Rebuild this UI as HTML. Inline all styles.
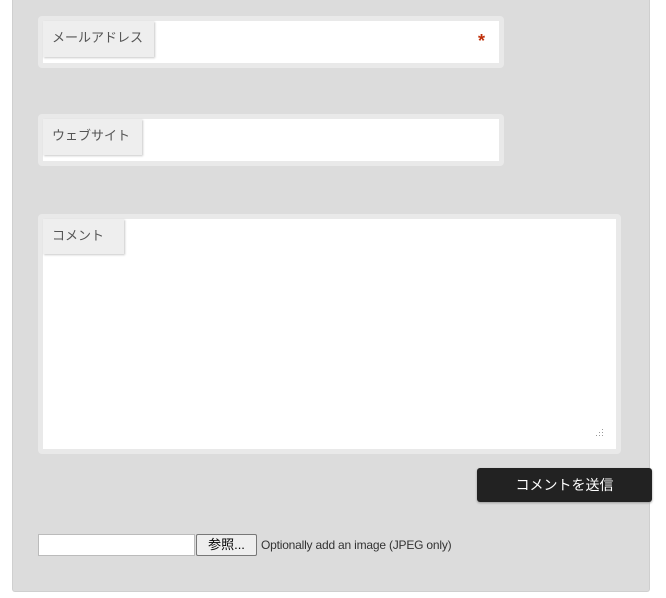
<!DOCTYPE html>
<html><head><meta charset="utf-8"><style>
body{margin:0;width:666px;height:598px;background:#fff;position:relative;overflow:hidden;font-family:"Liberation Sans","Noto Sans CJK JP",sans-serif}
.panel{position:absolute;left:12px;top:-2px;width:636px;height:593px;background:#dcdcdc;border:1px solid #cfcfcf;border-top:none;border-radius:0 0 3px 3px}
.f{position:absolute;background:#fff;border:5px solid #e9e9e9;border-radius:4px;box-sizing:border-box}
.lab{position:absolute;left:0;top:0;background:#eee;color:#555;font-size:13px;box-shadow:1px 1px 2px #c8c8c8;box-sizing:border-box;padding-left:9px;line-height:34px}
.star{position:absolute;right:14px;top:10px;color:#c0300a;font-weight:bold;font-size:18px}
.btn{position:absolute;left:477px;top:468px;width:175px;height:34px;background:#222;color:#fff;border-radius:3px;font-size:14px;line-height:34px;text-align:center;box-shadow:0 1px 2px #999}
.fi{position:absolute;left:38px;top:534px;width:157px;height:22px;background:#fff;border:1px solid #bbb;box-sizing:border-box}
.fb{position:absolute;left:196px;top:534px;width:61px;height:22px;background:#eee;border:1px solid #777;border-radius:2px;box-sizing:border-box;font-size:13px;text-align:center;line-height:20px}
.t{position:absolute;left:261px;top:538px;font-size:12px;color:#333;letter-spacing:-0.2px}
.grip{position:absolute;right:12px;bottom:12px;width:10px;height:10px}
</style></head><body>
<div class="panel"></div>
<div class="f" style="left:38px;top:16px;width:466px;height:52px"><div class="lab" style="width:111px;height:36px">メールアドレス</div><div class="star">*</div></div>
<div class="f" style="left:38px;top:114px;width:466px;height:52px"><div class="lab" style="width:99px;height:36px">ウェブサイト</div></div>
<div class="f" style="left:38px;top:214px;width:583px;height:240px"><div class="lab" style="width:81px;height:35px">コメント</div>
<svg class="grip" viewBox="0 0 10 10"><g fill="#999"><rect x="8" y="2" width="1" height="1"/><rect x="8" y="5" width="1" height="1"/><rect x="8" y="8" width="1" height="1"/><rect x="5" y="5" width="1" height="1"/><rect x="5" y="8" width="1" height="1"/><rect x="2" y="8" width="1" height="1"/></g></svg></div>
<div class="btn">コメントを送信</div>
<div class="fi"></div><div class="fb">参照...</div>
<div class="t">Optionally add an image (JPEG only)</div>
</body></html>
